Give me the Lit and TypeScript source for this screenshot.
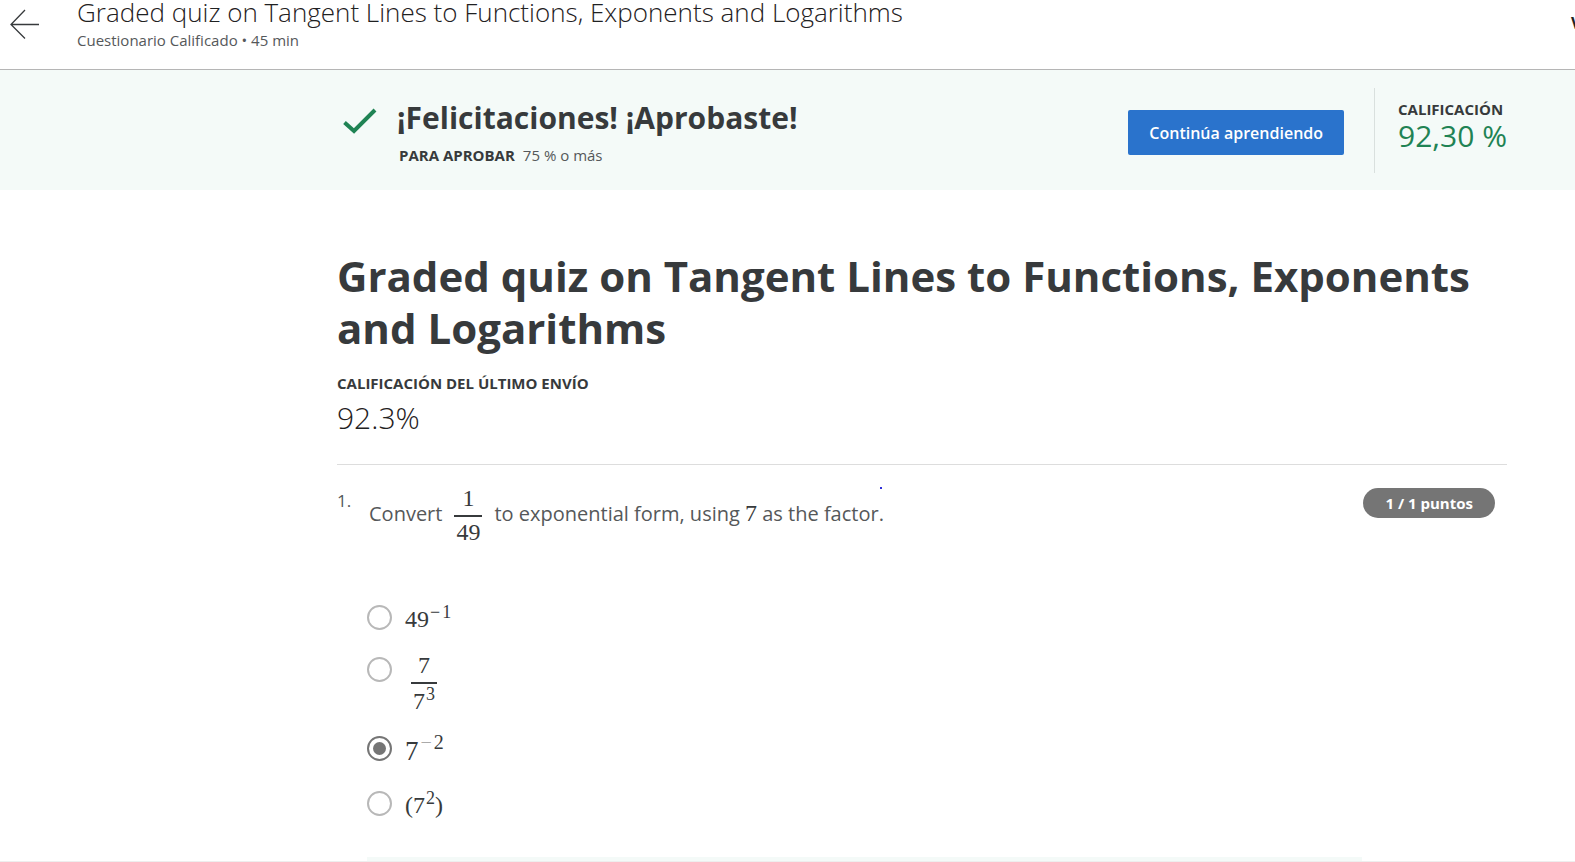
import { LitElement, html, css } from "lit";
import { customElement, state } from "lit/decorators.js";

@customElement("math-fraction")
class MathFraction extends LitElement {
  static styles = css`
    :host {
      display: inline-flex;
      flex-direction: column;
      align-items: stretch;
      text-align: center;
      font-family: "Liberation Serif", serif;
      font-size: 24px;
      line-height: 22px;
    }
    .top {
      padding: 0 2px 6px;
      border-bottom: 2px solid #373a3c;
    }
    .bottom {
      padding: var(--denominator-gap, 4px) 2px 0;
    }
  `;
  render() {
    return html`<span class="top"><slot name="top"></slot></span
      ><span class="bottom"><slot></slot></span>`;
  }
}

@customElement("app-root")
class AppRoot extends LitElement {
  static styles = css`
    * {
      box-sizing: border-box;
    }
    :host {
      display: block;
      min-height: 100vh;
      overflow: hidden;
      background: #fff;
      color: #373a3c;
      font-family: "Open Sans", sans-serif;
      font-size: 15px;
      line-height: 20px;
    }
    h1,
    h2,
    p {
      margin: 0;
    }
    .topbar {
      display: flex;
      align-items: flex-start;
      height: 70px;
      padding-left: 10px;
      border-bottom: 1px solid #b5b5b5;
      overflow: hidden;
    }
    .back {
      flex: none;
      width: 29px;
      height: 30px;
      margin: 9px 38px 0 0;
    }
    .back svg,
    .tick {
      display: block;
    }
    .heading {
      flex: 1;
      min-width: 0;
    }
    .course {
      color: #1f2122;
      font-size: 26px;
      font-weight: 300;
      line-height: 24px;
      white-space: nowrap;
    }
    .sub {
      padding-top: 6px;
    }
    .soft {
      color: #55585a;
    }
    .more {
      flex: none;
      width: 4px;
      margin-top: 13px;
      font-size: 16px;
      font-weight: 700;
      color: #222;
      text-decoration: none;
      white-space: nowrap;
    }
    .banner {
      display: flex;
      height: 120px;
      padding: 18px 68px 17px 343px;
      background: #f4faf8;
    }
    .tick {
      flex: none;
      margin: 20px 20px 0 0;
    }
    .result {
      flex: 1;
    }
    .result h2 {
      padding-top: 9px;
      font-size: 30px;
      font-weight: 700;
      line-height: 42px;
    }
    .pass {
      display: flex;
      gap: 8px;
      padding: 6px 0 0 2px;
    }
    .caps {
      font-weight: 700;
    }
    .continue {
      height: 45px;
      margin: 22px 30px 0 0;
      padding: 0 21px;
      border: 0;
      border-radius: 2px;
      background: #2a73cc;
      color: #fff;
      font: 600 16px/24px "Open Sans", sans-serif;
    }
    .grade {
      padding: 11px 0 0 23px;
      border-left: 1px solid #d9e0de;
    }
    .score {
      font-size: 30px;
      line-height: 34px;
      color: #1f8354;
    }
    main {
      padding: 60px 68px 0 337px;
    }
    h1 {
      font-size: 42px;
      font-weight: 700;
      line-height: 52px;
    }
    .last {
      padding-top: 19px;
    }
    .percent {
      padding: 5px 0 26px;
      border-bottom: 1px solid #ddd;
      color: #1f2122;
      font-size: 30px;
      font-weight: 300;
      line-height: 40px;
    }
    .question {
      display: flex;
      align-items: flex-start;
      padding: 22px 12px 0 0;
    }
    .number {
      flex: none;
      width: 32px;
      padding-top: 4px;
      font-size: 17px;
    }
    .prompt {
      display: flex;
      flex: 1;
      align-items: center;
      font-size: 20px;
      line-height: 28px;
      white-space: nowrap;
    }
    .words {
      padding-bottom: 2px;
    }
    .prompt math-fraction {
      margin: 0 12px;
    }
    .serif {
      color: #373a3c;
      font-family: "Liberation Serif", serif;
      font-size: 24px;
      line-height: 24px;
    }
    .dot {
      align-self: flex-start;
      width: 2px;
      height: 2px;
      margin-left: -4px;
      background: #3030d8;
    }
    .points {
      margin-top: 1px;
      padding: 0 22px;
      border-radius: 15px;
      background: #757575;
      color: #fff;
      font-weight: 700;
      line-height: 30px;
    }
    .options {
      display: flex;
      flex-direction: column;
      gap: 24px;
      margin: 0;
      padding: 62px 0 38px 30px;
      border: 0;
    }
    .option {
      display: flex;
      align-items: flex-start;
      gap: 13px;
      font-family: "Liberation Serif", serif;
      font-size: 24px;
      line-height: 28px;
    }
    .option input {
      appearance: none;
      flex: none;
      display: grid;
      place-items: center;
      width: 25px;
      height: 25px;
      margin: 0;
      border: 2px solid #b8b8b8;
      border-radius: 50%;
      background: #fff;
    }
    .option input:checked {
      border-color: #757575;
    }
    .option input:checked::before {
      content: "";
      width: 13px;
      height: 13px;
      border-radius: 50%;
      background: #757575;
    }
    .option math-fraction {
      --denominator-gap: 6px;
      margin: -3px 0 0 6px;
    }
    .big {
      font-size: 27px;
      line-height: 31px;
    }
    .faint {
      color: #aaa;
    }
    sup {
      margin-left: 1px;
      font-size: 18px;
      line-height: 0;
      vertical-align: 9px;
    }
    .minus {
      margin-right: 2px;
    }
    .big sup {
      margin-left: 2px;
      font-size: 20px;
      vertical-align: 11px;
    }
    .feedback {
      height: 40px;
      margin: 0 145px 0 30px;
      background: #f4faf8;
    }
    .page {
      height: 100vh;
      overflow: hidden;
      border-bottom: 1px solid #eee;
    }
  `;

  @state() private selected = 2;

  private options = [
    html`<span>49<sup><span class="minus">−</span>1</sup></span>`,
    html`<math-fraction><span slot="top">7</span>7<sup>3</sup></math-fraction>`,
    html`<span class="big">7<sup><span class="minus faint">−</span>2</sup></span>`,
    html`<span>(7<sup>2</sup>)</span>`,
  ];

  render() {
    return html`<div class="page">
      <header class="topbar">
        <a class="back" href="#" aria-label="Back">
          <svg width="29" height="30" fill="none" stroke="#373a3c" stroke-width="1.3">
            <path d="M29 15.5H1M15 1 1 15.5 15 29.5" />
          </svg>
        </a>
        <div class="heading">
          <p class="course">Graded quiz on Tangent Lines to Functions, Exponents and Logarithms</p>
          <p class="sub soft">Cuestionario Calificado • 45 min</p>
        </div>
        <a class="more" href="#">V</a>
      </header>
      <section class="banner">
        <svg class="tick" width="34" height="26" fill="none" stroke="#1f8354" stroke-width="4">
          <path d="M1.5 14.5 11 23 32 2" />
        </svg>
        <div class="result">
          <h2>¡Felicitaciones! ¡Aprobaste!</h2>
          <p class="pass"><span class="caps">PARA APROBAR</span><span class="soft">75 % o más</span></p>
        </div>
        <button class="continue" type="button">Continúa aprendiendo</button>
        <div class="grade">
          <p class="caps">CALIFICACIÓN</p>
          <p class="score">92,30 %</p>
        </div>
      </section>
      <main>
        <h1>Graded quiz on Tangent Lines to Functions, Exponents and Logarithms</h1>
        <p class="last caps">CALIFICACIÓN DEL ÚLTIMO ENVÍO</p>
        <p class="percent">92.3%</p>
        <div class="question">
          <span class="number soft">1.</span>
          <div class="prompt">
            <span class="words soft">Convert</span>
            <math-fraction><span slot="top">1</span>49</math-fraction>
            <span class="words soft">to exponential form, using <span class="serif">7</span> as the factor.</span>
            <span class="dot"></span>
          </div>
          <span class="points">1 / 1 puntos</span>
        </div>
        <fieldset class="options" aria-label="1">
          ${this.options.map(
            (o, i) => html`<label class="option"
              ><input
                type="radio"
                name="answer"
                .checked=${this.selected === i}
                @change=${() => (this.selected = i)}
              />${o}</label
            >`
          )}
        </fieldset>
        <div class="feedback"></div>
      </main>
    </div>`;
  }
}
